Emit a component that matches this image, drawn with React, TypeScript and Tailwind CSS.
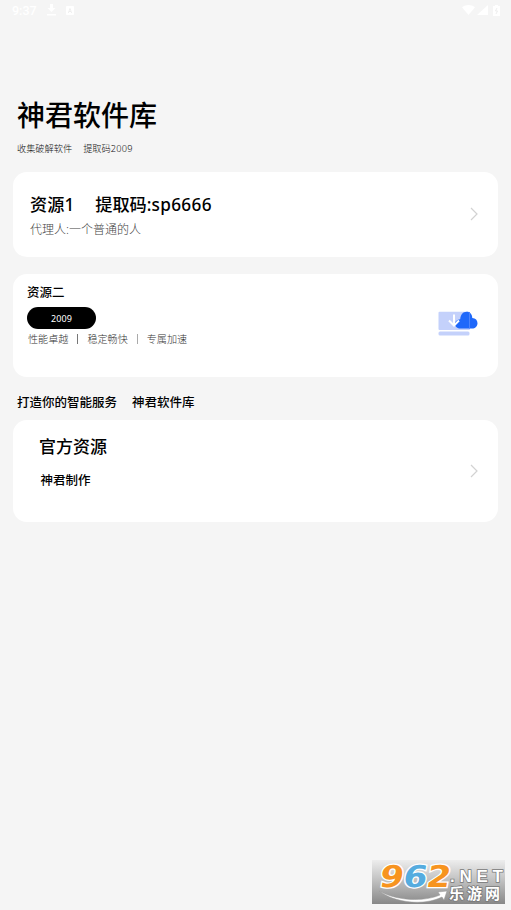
import type { ReactNode } from "react";

// thin arrow on the right of a card
function Arrow() {
  return (
    <svg className="-mt-px" width="8" height="14" viewBox="0 0 8 14" fill="none" stroke="#d2d2d2" strokeWidth="1.2">
      <path d="M1 1l6 6-6 6" />
    </svg>
  );
}

function Card({ className, children }: { className: string; children: ReactNode }) {
  return (
    <div className={`flex items-center justify-between rounded-[14px] bg-white ${className}`}>
      {children}
    </div>
  );
}

function StatusBar() {
  return (
    <div className="flex h-5 items-center justify-between pl-[12px] pr-[11px] text-white">
      <div className="flex items-center">
        <span className="w-[35px] pt-[2px] font-[Roboto] text-[12.500px] font-medium leading-5">9:37</span>
        <svg width="9" height="12" viewBox="0 0 9 12" fill="currentColor">
          <path d="M3 0h3v4h2.500l-4 4-4-4H3zM0 10h9v1.500H0z" />
        </svg>
        <svg className="ml-[10px]" width="8" height="9" viewBox="0 0 8 9">
          <rect width="8" height="9" rx="1" fill="currentColor" />
          <path d="M2.300 7L4 2.500 5.700 7M3 5.500h2" fill="none" stroke="#e6e6e6" strokeWidth="0.600" />
        </svg>
      </div>
      <div className="flex items-center">
        <svg width="13" height="10" viewBox="0 0 13 10" fill="currentColor">
          <path d="M0 2.200C4-.7 9-.7 13 2.200L6.500 10z" />
        </svg>
        <svg className="ml-[2px]" width="11" height="10" viewBox="0 0 11 10" fill="currentColor">
          <path d="M11 0v10H0z" />
        </svg>
        <svg className="ml-[5px]" width="7" height="11" viewBox="0 0 7 11">
          <path d="M2 0h3v1h2v10H0V1h2z" fill="currentColor" />
          <path d="M4 3L2.500 6h2L3 9" fill="none" stroke="#e2e2e2" strokeWidth="0.600" />
        </svg>
      </div>
    </div>
  );
}

function CloudIcon() {
  return (
    <svg className="-mt-[5px]" width="40" height="25" viewBox="0 0 40 25">
      <rect x="0.500" y="0.800" width="31.500" height="18.200" rx="1" fill="#c4d1fb" />
      <path
        d="M22.500 17.500c-3.200 0-5.500-2-5.500-4.600 0-2.700 2.200-4.500 5.200-4.700C22.700 3.500 25 .8 28.500.8s5.800 2.700 5.800 6.200c3.300.2 5.200 2.300 5.200 5.200 0 3-2.300 5.300-5.500 5.300z"
        fill="#1f68fa"
      />
      <path d="M31.500 1v16.500" stroke="#4d84fb" />
      <path d="M16 3.500v10M11 9.500l5 5 5-5" fill="none" stroke="#fff" strokeWidth="2" />
      <rect x="0.500" y="20.500" width="31" height="4" rx="1.500" fill="#c4d1fb" />
    </svg>
  );
}

function Watermark() {
  return (
    <svg className="absolute left-[372px] top-[860px]" width="133" height="44" viewBox="0 0 133 44">
      <defs>
        <linearGradient id="bg" x1="0" y1="0" x2="0" y2="1">
          <stop offset="0" stopColor="#ededed" />
          <stop offset="0.500" stopColor="#bdbdbd" />
          <stop offset="1" stopColor="#888888" />
        </linearGradient>
      </defs>
      <rect width="133" height="44" fill="url(#bg)" />
      <path d="M7 31c18 10 45 11 61 4l-2-3 9-1-3 9-2-3C52 46 23 43 7 31z" fill="#fff" stroke="#999" strokeWidth="0.500" />
      <g
        transform="translate(6 0) skewX(-10)"
        fontFamily="'DejaVu Sans', sans-serif"
        fontWeight="700"
        fontSize="30"
        stroke="#fff"
        strokeWidth="2.500"
        paintOrder="stroke"
      >
        <text x="5" y="27" textLength="24" lengthAdjust="spacingAndGlyphs" fill="#f7941f">9</text>
        <text x="28.500" y="27" textLength="24" lengthAdjust="spacingAndGlyphs" fill="#55acdf">6</text>
        <text x="52" y="27" textLength="24" lengthAdjust="spacingAndGlyphs" fill="#f7941f">2</text>
      </g>
      <g fill="#fff" stroke="#777" strokeWidth="1.500" paintOrder="stroke" fontWeight="700">
        <text x="78" y="21.500" fontSize="17" fontFamily="'Liberation Sans', sans-serif" textLength="53">
          .NET
        </text>
        <text x="77" y="39" fontSize="15" fontFamily="'Noto Sans CJK SC', sans-serif" textLength="51">
          乐游网
        </text>
      </g>
    </svg>
  );
}

export default function App() {
  return (
    <main className="relative h-[910px] w-[511px] overflow-hidden whitespace-nowrap bg-[#f5f5f5] font-['Noto_Sans','Noto_Sans_CJK_SC',sans-serif] text-black">
      <StatusBar />

      <header className="pl-[17px] pt-[75px]">
        <h1 className="text-[28px] font-medium leading-10">神君软件库</h1>
        <p className="mt-[7px] flex gap-[11px] text-[9.200px] font-light leading-[14px] text-[#111]">
          <span>收集破解软件</span>
          <span>提取码<span className="tracking-[0.25px]">2009</span></span>
        </p>
      </header>

      <div className="mt-[16px] px-[13px]">
        <Card className="h-[85px] pl-[17px] pr-[20px]">
          <div className="pt-[3px]">
            <h2 className="flex gap-[21px] text-[17.200px] font-medium leading-6">
              <span>资源1</span>
              <span>提取码:<span className="tracking-[0.35px]">sp6666</span></span>
            </h2>
            <p className="mt-[3px] text-[12px] font-light leading-5 text-[#444]">代理人:一个普通的人</p>
          </div>
          <Arrow />
        </Card>

        <Card className="mt-[17px] h-[103px] pl-[14px] pr-[20px]">
          <div className="h-full pt-[9px]">
            <h3 className="text-[12.500px] font-medium leading-5">资源二</h3>
            <div className="mt-[4px] h-[22px] w-[69px] rounded-full bg-black text-center text-[9px] leading-[23px] tracking-[0.1px] text-white">
              2009
            </div>
            <div className="flex items-center pl-px text-[10.100px] font-light leading-[20px] text-[#333]">
              <span>性能卓越</span>
              <i className="mx-[9px] h-[10px] w-px bg-[#777]" />
              <span>稳定畅快</span>
              <i className="mx-[9px] h-[10px] w-px bg-[#aaa]" />
              <span>专属加速</span>
            </div>
          </div>
          <CloudIcon />
        </Card>

        <h3 className="flex h-[43px] items-center gap-[15px] pl-[4px] pt-[10px] text-[12.500px] font-medium">
          <span>打造你的智能服务</span>
          <span>神君软件库</span>
        </h3>

        <Card className="h-[102px] pl-[26px] pr-[20px]">
          <div className="h-full pt-[15px]">
            <h2 className="text-[17px] font-medium leading-6">官方资源</h2>
            <p className="mt-[12px] pl-[1.500px] text-[12.500px] font-medium leading-5">神君制作</p>
          </div>
          <Arrow />
        </Card>
      </div>

      <Watermark />
    </main>
  );
}
